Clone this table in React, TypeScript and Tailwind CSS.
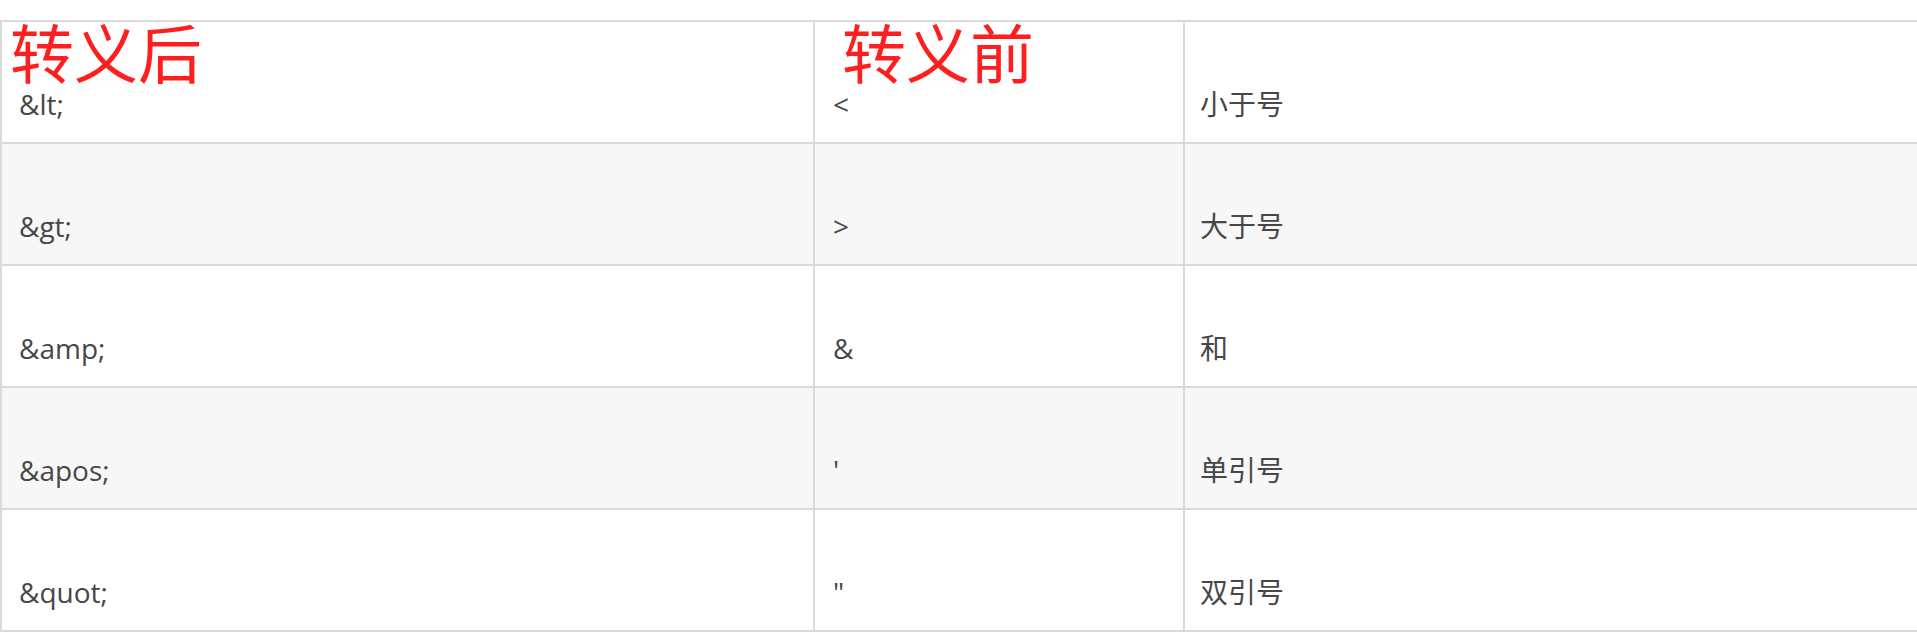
import React from "react";

const rows = [
  { a: "&lt;", b: "<", c: "小于号" },
  { a: "&gt;", b: ">", c: "大于号" },
  { a: "&amp;", b: "&", c: "和" },
  { a: "&apos;", b: "'", c: "单引号" },
  { a: "&quot;", b: '"', c: "双引号" },
];

export default function App() {
  return (
    <div
      className="relative w-[1917px] h-[636px] bg-white overflow-hidden"
      style={{ fontFamily: '"Open Sans", "Noto Sans CJK SC", sans-serif' }}
    >
      <div className="mt-[20px] border-t-2 border-[#dadada] w-[2000px]">
        {rows.map((r, i) => (
          <div
            key={i}
            className={`flex h-[122px] border-b-2 border-[#dadada] ${
              i % 2 === 1 ? "bg-[#f7f7f7]" : "bg-white"
            }`}
          >
            <div className="w-[813px] border-l-2 border-[#dadada] pl-[17px] pt-[64px] text-[28px] leading-[36px] text-[#474747]">
              {r.a}
            </div>
            <div className="w-[370px] border-l-2 border-[#dadada] pl-[18px] pt-[64px] text-[28px] leading-[36px] text-[#474747]">
              {r.b}
            </div>
            <div className="flex-1 border-l-2 border-[#dadada] pl-[15px] pt-[64px] text-[28px] leading-[36px] text-[#474747]">
              {r.c}
            </div>
          </div>
        ))}
      </div>
      <div
        className="absolute left-[10px] top-[18px] text-[64px] leading-[64px] text-[#ff1e1e]"
        style={{ fontFamily: '"Noto Sans CJK SC", sans-serif' }}
      >
        转义后
      </div>
      <div
        className="absolute left-[842px] top-[18px] text-[64px] leading-[64px] text-[#ff1e1e]"
        style={{ fontFamily: '"Noto Sans CJK SC", sans-serif' }}
      >
        转义前
      </div>
    </div>
  );
}
